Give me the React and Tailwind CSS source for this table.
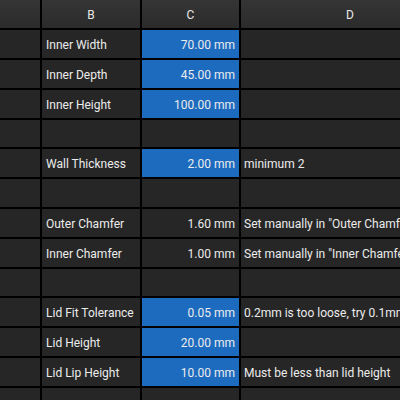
import React from 'react';

const rows = [
  { label: 'Inner Width', value: '70.00 mm', input: true, h: 'h-[30px]' },
  { label: 'Inner Depth', value: '45.00 mm', input: true, h: 'h-[30px]' },
  { label: 'Inner Height', value: '100.00 mm', input: true, h: 'h-[30px]' },
  { h: 'h-[29px]' },
  { label: 'Wall Thickness', value: '2.00 mm', input: true, note: 'minimum 2', h: 'h-[30px]' },
  { h: 'h-[30px]' },
  { label: 'Outer Chamfer', value: '1.60 mm', note: 'Set manually in "Outer Chamfer" feature', h: 'h-[30px]' },
  { label: 'Inner Chamfer', value: '1.00 mm', note: 'Set manually in "Inner Chamfer" feature', h: 'h-[30px]' },
  { h: 'h-[29px]' },
  { label: 'Lid Fit Tolerance', value: '0.05 mm', input: true, note: '0.2mm is too loose, try 0.1mm if needed', h: 'h-[30px]' },
  { label: 'Lid Height', value: '20.00 mm', input: true, h: 'h-[30px]' },
  { label: 'Lid Lip Height', value: '10.00 mm', input: true, note: 'Must be less than lid height', h: 'h-[30px]' },
  { h: 'h-[30px]' },
];

const Header = ({ children, className = '' }) => (
  <div className={`flex items-center justify-center border-r-2 border-b-2 border-black bg-gradient-to-b from-[#353535] to-[#2b2b2b] text-[#e8e8e8] pt-[1px] ${className}`}>
    {children}
  </div>
);

const Row = ({ row }) => (
  <div className={`flex ${row.h}`}>
    <div className="w-[42px] shrink-0 border-r-2 border-b-2 border-black bg-[#262626]" />
    <div className="w-[100px] shrink-0 border-r-2 border-b-2 border-black bg-[#262626] flex items-center pl-[4px] pt-[2px] overflow-hidden whitespace-nowrap">
      {row.label}
    </div>
    <div className={`w-[99px] shrink-0 border-r-2 border-b-2 border-black flex items-center justify-end pr-[4px] pt-[2px] whitespace-nowrap ${row.input ? 'bg-[#1d6bbf]' : 'bg-[#262626]'}`}>
      {row.value}
    </div>
    <div className="w-[220px] shrink-0 border-r-2 border-b-2 border-black bg-[#262626] flex items-center pl-[3px] pt-[2px] overflow-hidden whitespace-nowrap">
      {row.note}
    </div>
  </div>
);

export default function App() {
  return (
    <div className="w-[400px] h-[400px] overflow-hidden bg-[#262626] text-[#ececec] text-[12px] font-['Roboto','Noto_Sans',sans-serif]">
      <div className="flex h-[30px]">
        <Header className="w-[42px] shrink-0" />
        <Header className="w-[100px] shrink-0">B</Header>
        <Header className="w-[99px] shrink-0">C</Header>
        <Header className="w-[220px] shrink-0">D</Header>
      </div>
      {rows.map((row, i) => (
        <Row key={i} row={row} />
      ))}
    </div>
  );
}
